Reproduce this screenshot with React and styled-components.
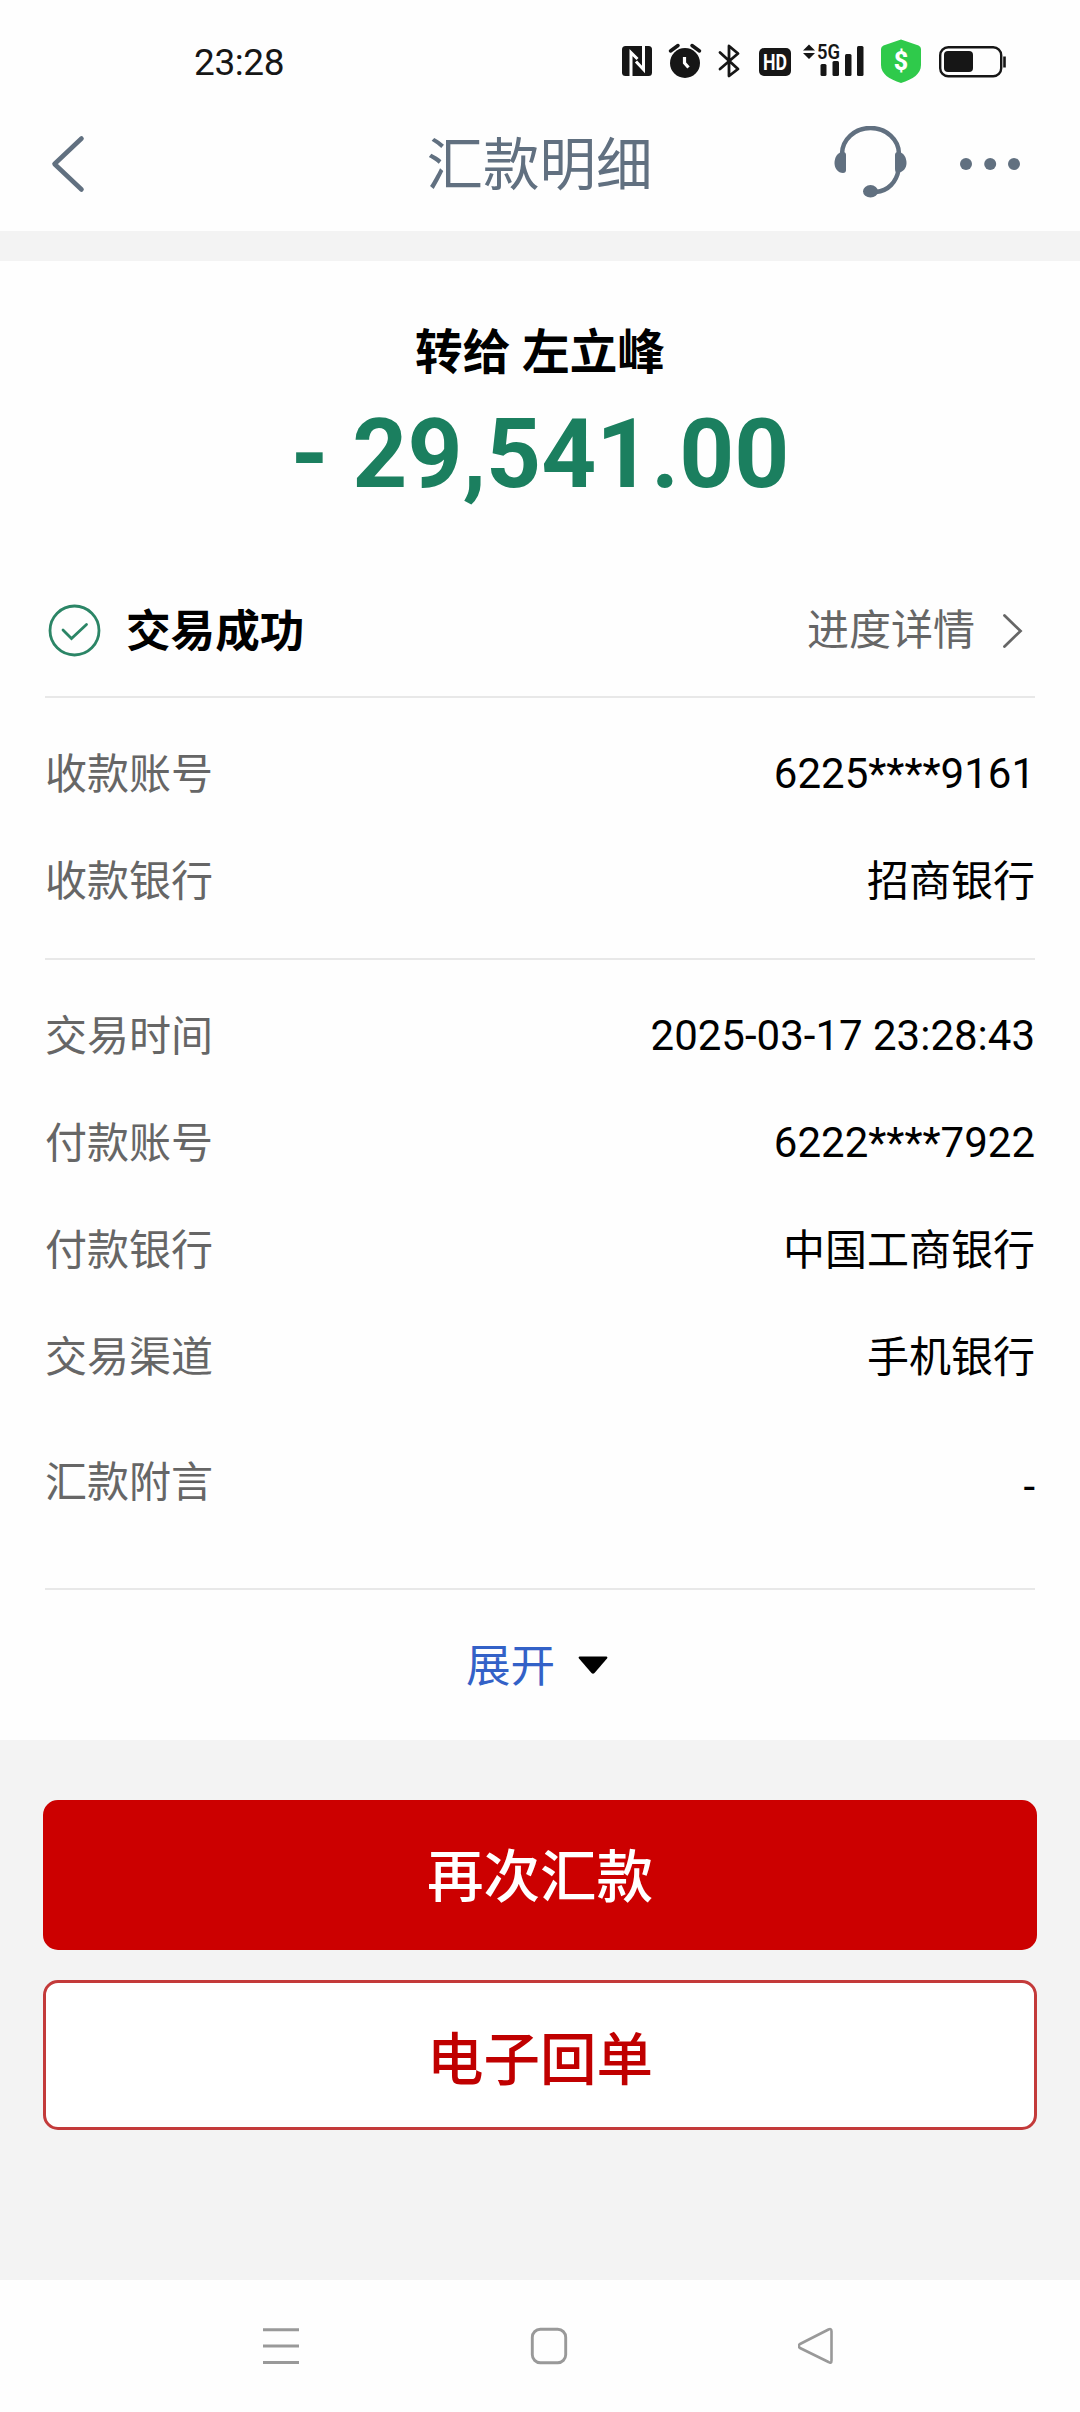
import styled, { createGlobalStyle } from 'styled-components';

const GlobalStyle = createGlobalStyle`
  * {
    box-sizing: border-box;
  }

  body {
    margin: 0;
    background: #fff;
    font-family: Roboto, "Noto Sans CJK SC", sans-serif;
    color: #000;
  }

  svg {
    display: block;
    flex-shrink: 0;
  }
`;

const Screen = styled.div`
  width: 1080px;
  height: 2412px;
  display: flex;
  flex-direction: column;
  background: #fefefe;
  overflow: hidden;
`;

const StatusBar = styled.div`
  height: 96px;
  padding: 26px 71px 0 194px;
  display: flex;
  justify-content: space-between;
`;

const Clock = styled.span`
  height: 72px;
  line-height: 73px;
  font-size: 37px;
  letter-spacing: -0.4px;
  color: #161616;
`;

const StatusIcons = styled.div`
  display: flex;
  gap: 10px;
  padding-top: 10px;
  color: #161616;
`;

const Header = styled.header`
  height: 135px;
  padding: 0 60px 0 50px;
  display: grid;
  grid-template-columns: 1fr auto 1fr;
  align-items: center;
  color: #617080;
`;

const Title = styled.h1`
  margin: 0 -9px 0 0;
  padding-top: 5px;
  font-size: 56.5px;
  line-height: 80px;
  font-weight: 400;
`;

const HeaderActions = styled.div`
  display: flex;
  justify-content: flex-end;
  align-items: center;
  gap: 53px;
`;

const Band = styled.div`
  height: 30px;
  background: #f3f3f3;
`;

const Card = styled.main`
  height: 1479px;
  padding: 0 45px;
  display: flex;
  flex-direction: column;
`;

const Summary = styled.section`
  height: 304px;
  padding-top: 59px;
  text-align: center;
`;

const Payee = styled.div`
  font-size: 47.6px;
  line-height: 66px;
  font-weight: 700;
`;

const Amount = styled.div`
  font-size: 96px;
  line-height: 120px;
  margin-top: 8px;
  font-weight: 700;
  color: #1b7f5f;
`;

const ResultRow = styled.div`
  height: 131px;
  padding: 0 12px 0 3px;
  display: flex;
  align-items: center;
`;

const ResultText = styled.span`
  margin-left: 25px;
  padding-top: 2px;
  font-size: 44.6px;
  line-height: 60px;
  font-weight: 700;
`;

const ProgressLink = styled.a`
  margin-left: auto;
  display: flex;
  align-items: center;
  gap: 27px;
  font-size: 42px;
  line-height: 60px;
  color: #666;
`;

const Divider = styled.div`
  height: 2px;
  flex-shrink: 0;
  background: #e8e8e8;
`;

const Rows = styled.dl`
  margin: 0;
  padding: 23px 0 0;
  height: ${({ $height }) => $height}px;
`;

const Row = styled.div`
  height: 107px;
  margin-top: ${({ $gap }) => $gap || 0}px;
  display: flex;
  justify-content: space-between;
  align-items: center;
  font-size: 42px;
  line-height: 60px;
`;

const Label = styled.dt`
  color: #666;
`;

const Value = styled.dd`
  margin: 0;
  padding-bottom: ${({ $numeric }) => ($numeric ? 2 : 0)}px;
  padding-top: ${({ $empty }) => ($empty ? 8 : 0)}px;
`;

const Expand = styled.button`
  flex: 1;
  border: 0;
  padding: 0 6px 0 0;
  background: none;
  display: flex;
  justify-content: center;
  align-items: center;
  gap: 23px;
  font: inherit;
  font-size: 44.6px;
  color: #3361c7;

  span {
    padding-bottom: 5px;
  }
`;

const Footer = styled.footer`
  height: 540px;
  padding: 60px 43px;
  display: flex;
  flex-direction: column;
  gap: 30px;
  background: #f3f3f3;
`;

const Button = styled.button`
  height: 150px;
  border: 3px solid ${({ $primary }) => ($primary ? '#c00' : '#c33a3a')};
  border-radius: 15px;
  padding: 0 0 ${({ $primary }) => ($primary ? 6 : 1)}px;
  background: ${({ $primary }) => ($primary ? '#c00' : '#fff')};
  color: ${({ $primary }) => ($primary ? '#fff' : '#c00000')};
  font: inherit;
  font-size: 56.5px;
  font-weight: 500;
`;

const NavBar = styled.nav`
  height: 132px;
  padding-left: 262px;
  display: flex;
  align-items: center;
  gap: 230px;
  color: #999;
`;

function StatusIconSet() {
  return (
    <StatusIcons>
      <svg width="36" height="50" viewBox="0 0 36 50">
        <rect x="3" y="10" width="30" height="30" rx="3.5" fill="currentColor" />
        <path d="M12 40V16.5L18.5 23M24.5 10V33.5L17 25.5" fill="none" stroke="#fff" strokeWidth="3" />
      </svg>
      <svg width="40" height="50" viewBox="0 0 40 50">
        <circle cx="20" cy="27" r="15" fill="currentColor" />
        <path d="M5.5 15L13 9.5M34.5 15L27 9.5" stroke="currentColor" strokeWidth="3.5" strokeLinecap="round" />
        <path d="M19.5 21V27L23.5 31.5" fill="none" stroke="#fff" strokeWidth="3.2" />
      </svg>
      <svg width="30" height="50" viewBox="0 0 30 50">
        <path d="M5 16.5L23 33L14 40V10L23 17.5L5 33" fill="none" stroke="currentColor" strokeWidth="2.8" strokeLinejoin="round" strokeLinecap="round" />
      </svg>
      <svg width="38" height="50" viewBox="0 0 38 50">
        <rect x="4" y="12" width="32" height="28" rx="5" fill="currentColor" />
        <text x="20" y="34" textAnchor="middle" textLength="24" lengthAdjust="spacingAndGlyphs" fontSize="22" fontWeight="700" fill="#fff">HD</text>
      </svg>
      <svg width="66" height="50" viewBox="0 0 66 50" fill="currentColor">
        <path d="M0 14.5L6 8.5L12 14.5ZM0 17L6 23L12 17Z" />
        <text x="14" y="22.5" textLength="23" lengthAdjust="spacingAndGlyphs" fontSize="19.5" fontWeight="600">5G</text>
        <rect x="17.5" y="28" width="6" height="12" rx="1.5" />
        <rect x="29.5" y="25" width="6.5" height="15" rx="1.5" />
        <rect x="42" y="18" width="6.5" height="22" rx="1.5" />
        <rect x="54" y="10" width="6.5" height="30" rx="1.5" />
      </svg>
      <svg width="44" height="50" viewBox="0 0 44 50">
        <path d="M22 3.5L39.5 9.5Q42 10.5 42 13V29C42 38 34 43 22 47C10 43 2 38 2 29V13Q2 10.5 4.5 9.5Z" fill="#2fca4b" />
        <text x="22" y="34" textAnchor="middle" fontSize="25" fontWeight="800" fill="#fff">$</text>
      </svg>
      <svg width="76" height="50" viewBox="0 0 76 50">
        <rect x="7.2" y="11.2" width="61" height="29" rx="8" fill="none" stroke="currentColor" strokeWidth="2.4" />
        <rect x="11" y="15" width="29" height="21" rx="4" fill="currentColor" />
        <path d="M71.5 20.5V31.5" stroke="currentColor" strokeWidth="2.6" />
      </svg>
    </StatusIcons>
  );
}

function HeadsetIcon() {
  return (
    <svg width="73" height="76" viewBox="0 0 73 76" fill="currentColor">
      <path d="M8 28A28.5 26 0 0 1 65 28" fill="none" stroke="currentColor" strokeWidth="4.5" />
      <path d="M12 29V44Q12 47 9 47C4 47 0.5 42.5 0.5 37C0.5 31.5 3.500 26 9 26Q12 26 12 29Z" />
      <path d="M61 29V43Q61 47 64 47C69 46 72.5 42.5 72.5 37C72.5 31.5 69.5 26 64 26Q61 26 61 29Z" />
      <path d="M64.5 44C62.5 56 54 65 42 66" fill="none" stroke="currentColor" strokeWidth="4.5" />
      <ellipse cx="36.5" cy="65.3" rx="7.5" ry="6.2" />
    </svg>
  );
}

const payeeRows = [
  { label: '收款账号', value: '6225****9161', numeric: true },
  { label: '收款银行', value: '招商银行' },
];

const detailRows = [
  { label: '交易时间', value: '2025-03-17 23:28:43', numeric: true },
  { label: '付款账号', value: '6222****7922', numeric: true },
  { label: '付款银行', value: '中国工商银行' },
  { label: '交易渠道', value: '手机银行' },
  { label: '汇款附言', value: '-', gap: 18, empty: true },
];

function DetailRows({ rows, height }) {
  return (
    <Rows $height={height}>
      {rows.map((row) => (
        <Row key={row.label} $gap={row.gap}>
          <Label>{row.label}</Label>
          <Value $numeric={row.numeric} $empty={row.empty}>{row.value}</Value>
        </Row>
      ))}
    </Rows>
  );
}

export default function App() {
  return (
    <>
      <GlobalStyle />
      <Screen>
        <StatusBar>
          <Clock>23:28</Clock>
          <StatusIconSet />
        </StatusBar>
        <Header>
          <svg width="36" height="60" viewBox="0 0 36 60">
            <path d="M31.5 4.5L4.500 30L31.5 55.5" fill="none" stroke="currentColor" strokeWidth="4.6" strokeLinecap="round" strokeLinejoin="round" />
          </svg>
          <Title>汇款明细</Title>
          <HeaderActions>
            <HeadsetIcon />
            <svg width="60" height="12" viewBox="0 0 60 12" fill="currentColor">
              <circle cx="6" cy="6" r="6" />
              <circle cx="30.2" cy="6" r="6" />
              <circle cx="54" cy="6" r="6" />
            </svg>
          </HeaderActions>
        </Header>
        <Band />
        <Card>
          <Summary>
            <Payee>转给 左立峰</Payee>
            <Amount>- 29,541.00</Amount>
          </Summary>
          <ResultRow>
            <svg width="53" height="53" viewBox="0 0 53 53" fill="none" stroke="#2b8566" strokeWidth="2.8">
              <circle cx="26.5" cy="26.5" r="24.5" />
              <path d="M15 26L23.5 34.5L38.5 20.5" strokeLinecap="round" />
            </svg>
            <ResultText>交易成功</ResultText>
            <ProgressLink>
              进度详情
              <svg width="21" height="36" viewBox="0 0 21 36">
                <path d="M2.5 2.5L18.5 18L2.5 33.5" fill="none" stroke="currentColor" strokeWidth="2.8" strokeLinecap="round" />
              </svg>
            </ProgressLink>
          </ResultRow>
          <Divider />
          <DetailRows rows={payeeRows} height={260} />
          <Divider />
          <DetailRows rows={detailRows} height={628} />
          <Divider />
          <Expand>
            <span>展开</span>
            <svg width="30" height="18" viewBox="0 0 30 18">
              <path d="M1.5 0.5H28.5Q30 1 29 2.5L16.5 17Q15 18.5 13.5 17L1 2.5Q0 1 1.5 0.5Z" fill="#000" />
            </svg>
          </Expand>
        </Card>
        <Footer>
          <Button $primary>再次汇款</Button>
          <Button>电子回单</Button>
        </Footer>
        <NavBar>
          <svg width="38" height="38" viewBox="0 0 38 38">
            <path d="M1 2.7H37M1 19H37M1 35.5H37" stroke="currentColor" strokeWidth="3" />
          </svg>
          <svg width="38" height="38" viewBox="0 0 38 38">
            <rect x="2.3" y="2.3" width="33.4" height="33.4" rx="8" fill="none" stroke="currentColor" strokeWidth="2.9" />
          </svg>
          <svg width="38" height="38" viewBox="0 0 38 38">
            <path d="M30.5 2.5Q33.5 1 33.5 4.5V33.5Q33.5 37 30.5 35L2 21Q-0.5 19 2 17Z" fill="none" stroke="currentColor" strokeWidth="2.6" strokeLinejoin="round" />
          </svg>
        </NavBar>
      </Screen>
    </>
  );
}
